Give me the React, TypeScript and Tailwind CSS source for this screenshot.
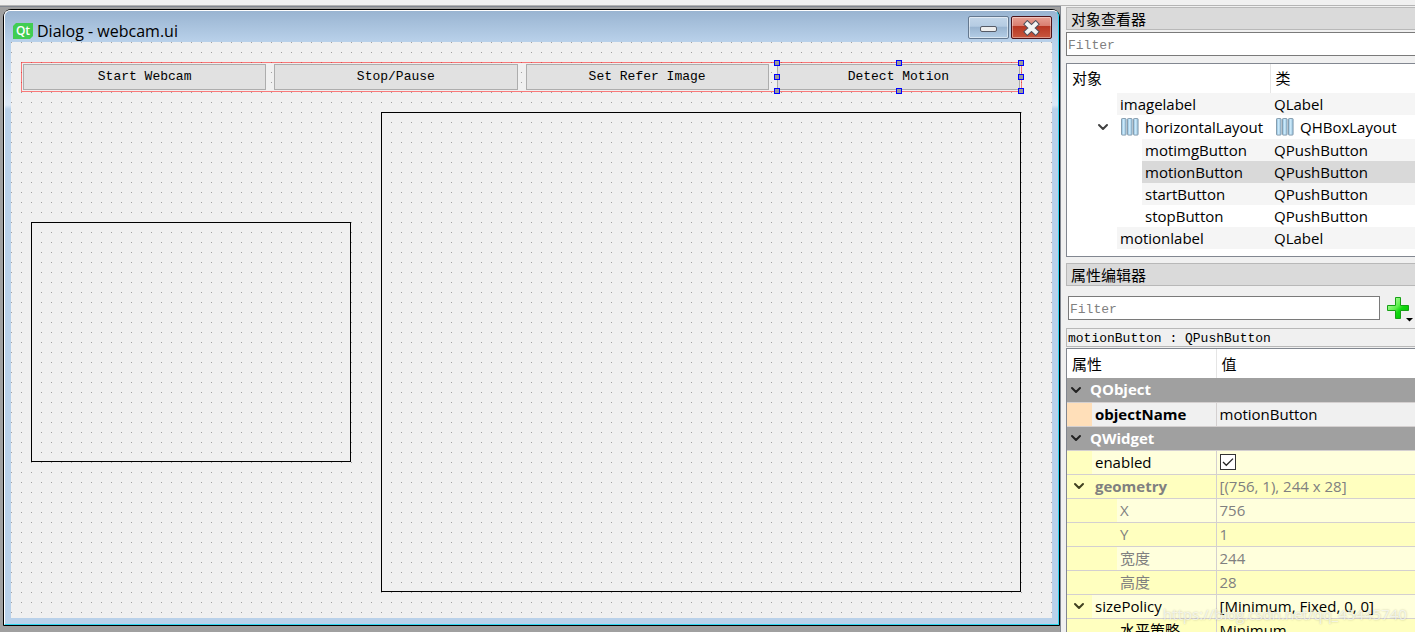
import { ReactNode } from 'react';
import { ChevronDown } from 'lucide-react';

interface TreeItem {
  name: string;
  type: string;
  level: 1 | 2;
  layout?: boolean;
  selected?: boolean;
  shaded?: boolean;
}

const OBJECTS: TreeItem[] = [
  { name: 'imagelabel', type: 'QLabel', level: 1, shaded: true },
  { name: 'horizontalLayout', type: 'QHBoxLayout', level: 1, layout: true },
  { name: 'motimgButton', type: 'QPushButton', level: 2, shaded: true },
  { name: 'motionButton', type: 'QPushButton', level: 2, selected: true },
  { name: 'startButton', type: 'QPushButton', level: 2, shaded: true },
  { name: 'stopButton', type: 'QPushButton', level: 2 },
  { name: 'motionlabel', type: 'QLabel', level: 1, shaded: true },
];

interface Property {
  name: string;
  value: ReactNode;
  tone: 'gray' | 'light' | 'dark';
  level: 1 | 2;
  open?: boolean;
  bold?: boolean;
  muted?: boolean;
}

const WIDGET_PROPERTIES: Property[] = [
  { name: 'enabled', value: <CheckBox label="enabled" />, tone: 'light', level: 1 },
  { name: 'geometry', value: '[(756, 1), 244 x 28]', tone: 'dark', level: 1, open: true, bold: true, muted: true },
  { name: 'X', value: '756', tone: 'light', level: 2, muted: true },
  { name: 'Y', value: '1', tone: 'dark', level: 2, muted: true },
  { name: '宽度', value: '244', tone: 'light', level: 2, muted: true },
  { name: '高度', value: '28', tone: 'dark', level: 2, muted: true },
  { name: 'sizePolicy', value: '[Minimum, Fixed, 0, 0]', tone: 'light', level: 1, open: true },
  { name: '水平策略', value: 'Minimum', tone: 'dark', level: 2 },
];

const HANDLES = [
  'left-0 top-0',
  'left-1/2 top-0',
  'left-full top-0',
  'left-0 top-1/2',
  'left-full top-1/2',
  'left-0 top-full',
  'left-1/2 top-full',
  'left-full top-full',
];

const MONO = "font-['Liberation_Mono','Noto_Sans_CJK_SC',monospace] text-[13px]";

function CheckBox({ label }: { label: string }) {
  return (
    <span className="relative block h-4 w-4">
      <input
        type="checkbox"
        defaultChecked
        aria-label={label}
        className="peer block h-4 w-4 appearance-none border border-[#333] bg-white"
      />
      <svg
        viewBox="0 0 16 16"
        className="pointer-events-none absolute inset-0 hidden h-4 w-4 peer-checked:block"
        fill="none"
        stroke="#222"
        strokeWidth="1.3"
      >
        <path d="M3 8 L6.3 11.3 L13 4.6" />
      </svg>
    </span>
  );
}

function QtLogo() {
  return (
    <svg viewBox="0 0 20 16" className="h-4 w-5 shrink-0">
      <path d="M3 0 H20 V13 L17 16 H0 V3 Z" fill="#41cd52" />
      <text
        x="10"
        y="12"
        textAnchor="middle"
        fill="#fff"
        fontFamily="Open Sans, sans-serif"
        fontWeight="600"
        fontSize="12"
      >
        Qt
      </text>
    </svg>
  );
}

function LayoutIcon() {
  return (
    <svg viewBox="0 0 18 18" className="h-[18px] w-[18px] shrink-0">
      <defs>
        <linearGradient id="bar" x1="0" x2="1" y1="0" y2="0">
          <stop offset="0" stopColor="#86b9dc" />
          <stop offset="0.45" stopColor="#cdeafa" />
          <stop offset="1" stopColor="#8fbbd8" />
        </linearGradient>
      </defs>
      {[0.5, 6.5, 12.5].map(x => (
        <rect
          key={x}
          x={x}
          y="0.5"
          width="4.6"
          height="16.6"
          rx="0.8"
          fill="url(#bar)"
          stroke="#7f96a8"
          strokeWidth="0.9"
        />
      ))}
    </svg>
  );
}

function PlusIcon() {
  return (
    <svg viewBox="0 0 27 26" className="h-[26px] w-[27px]">
      <defs>
        <linearGradient id="plus" x1="0" x2="1" y1="0" y2="1">
          <stop offset="0" stopColor="#d4ffc4" />
          <stop offset="0.45" stopColor="#5cf04a" />
          <stop offset="0.6" stopColor="#10d810" />
          <stop offset="1" stopColor="#00b800" />
        </linearGradient>
      </defs>
      <path
        d="M8.5 1.5 H13.5 V9.5 H21.5 V14.5 H13.5 V22.5 H8.5 V14.5 H0.5 V9.5 H8.5 Z"
        fill="url(#plus)"
        stroke="#16a016"
        strokeLinejoin="round"
      />
      <path d="M19 22 H26 L22.5 25.5 Z" fill="#000" />
    </svg>
  );
}

function DotGrid() {
  return (
    <svg className="pointer-events-none absolute inset-0 h-full w-full" shapeRendering="crispEdges">
      <defs>
        <pattern id="dots" width="10" height="10" patternUnits="userSpaceOnUse">
          <rect width="1" height="1" fill="#a0a0a0" />
        </pattern>
      </defs>
      <rect width="100%" height="100%" fill="url(#dots)" />
    </svg>
  );
}

function FormButton({ children, selected }: { children: ReactNode; selected?: boolean }) {
  return (
    <div className="relative flex-1">
      <button
        className={`${MONO} block h-[26px] w-full border border-[#adadad] bg-[#e1e1e1] text-black`}
      >
        {children}
      </button>
      {selected && (
        <div className="pointer-events-none absolute -inset-y-px -right-px left-0">
          {HANDLES.map(place => (
            <span
              key={place}
              className={`absolute h-1.5 w-1.5 -translate-x-1/2 -translate-y-1/2 border border-[#0000ff] bg-[#9b9b9b] ${place}`}
            />
          ))}
        </div>
      )}
    </div>
  );
}

function DesignWindow() {
  return (
    <section className="flex h-full flex-col rounded-t-lg border border-black bg-[#b9d1ea]">
      <div className="flex flex-1 flex-col rounded-t-md border border-t-white border-r-[#2fd5ee] border-b-[#2fd5ee] border-l-white bg-[linear-gradient(#99b4d1_0px,#b9d1ea_31px,#dce8f6_94px,#b9d1ea_98px)] px-1.5 pb-1.5">
        <header className="flex h-[31px] shrink-0 items-start justify-between">
          <div className="flex items-center gap-1 pt-2 pl-0.5">
            <QtLogo />
            <h1 className="text-base leading-6">Dialog - webcam.ui</h1>
          </div>
          <div className="flex gap-0.5 pt-[5px]">
            <button
              aria-label="Minimize"
              className="flex h-[23px] w-[41px] items-center justify-center rounded-xs border border-[#64788f] bg-[linear-gradient(#c3d6e9_0%,#b4cbe2_45%,#98b3cf_46%,#b4cee6_100%)] inset-ring inset-ring-white/50"
            >
              <span className="mt-0.5 h-1.5 w-[17px] rounded-xs border border-[#555a66] bg-[#eee]" />
            </button>
            <button
              aria-label="Close"
              className="flex h-[23px] w-[41px] items-center justify-center rounded-xs border border-[#4b1219] bg-[linear-gradient(#e8a093_0%,#d97e70_42%,#b73521_43%,#c8573f_100%)] inset-ring inset-ring-white/40"
            >
              <svg viewBox="0 0 19 16" className="h-4 w-[19px]" fill="none">
                <path d="M3.2 2 L15.8 14 M15.8 2 L3.2 14" stroke="#4d4f5c" strokeWidth="6" />
                <path d="M3.9 2.7 L15.1 13.3 M15.1 2.7 L3.9 13.3" stroke="#f3f3f3" strokeWidth="4" />
              </svg>
            </button>
          </div>
        </header>
        <main className="relative flex-1 bg-[#f0f0f0] pt-5 pr-[30px] pl-2.5">
          <DotGrid />
          <div className="relative flex gap-2 border border-[#ff0000]/50 p-px">
            <FormButton>Start Webcam</FormButton>
            <FormButton>Stop/Pause</FormButton>
            <FormButton>Set Refer Image</FormButton>
            <FormButton selected>Detect Motion</FormButton>
          </div>
          <div className="relative mt-5 flex items-start gap-[30px] pl-2.5">
            <div className="mt-[110px] h-60 w-80 shrink-0 border border-black" />
            <div className="h-[480px] w-[640px] border border-black" />
          </div>
        </main>
      </div>
    </section>
  );
}

function DockTitle({ children }: { children: ReactNode }) {
  return (
    <h2 className="h-[23px] border border-r-0 border-[#b8b8b8] bg-[#dadada] pl-1 text-[15px] leading-[22px]">
      {children}
    </h2>
  );
}

function ObjectInspector() {
  return (
    <section>
      <DockTitle>对象查看器</DockTitle>
      <input
        type="text"
        aria-label="Filter objects"
        placeholder="Filter"
        className={`${MONO} mt-0.5 block h-6 w-full border border-r-0 border-[#7a7a7a] bg-white px-px pt-0.5 placeholder:text-[#808080]`}
      />
      <div className="mt-[7px] border border-r-0 border-[#828790] bg-white pb-[7px]">
        <table className="w-full table-fixed border-collapse text-[15px]">
          <colgroup>
            <col className="w-[203px]" />
            <col />
          </colgroup>
          <thead>
            <tr className="h-[29px] text-left">
              <th className="border-r border-[#e5e5e5] p-0 pl-[5px] font-normal">对象</th>
              <th className="p-0 pl-[5px] font-normal">类</th>
            </tr>
          </thead>
          <tbody>
            {OBJECTS.map(item => {
              const fill = item.selected ? 'bg-[#d9d9d9]' : item.shaded ? 'bg-[#f5f5f5]' : 'bg-white';
              const indent = item.level === 2 ? 'pl-[75px]' : item.layout ? 'pl-7' : 'pl-[50px]';
              return (
                <tr key={item.name} className={item.layout ? 'h-6' : 'h-[22px]'}>
                  <td className={`p-0 leading-[22px] ${indent}`}>
                    <div
                      className={`flex items-center whitespace-nowrap ${
                        item.layout ? 'h-6' : 'h-[22px] pl-[3px]'
                      } ${fill}`}
                    >
                      {item.layout && (
                        <>
                          <ChevronDown className="mr-2.5 h-4 w-4 shrink-0 text-[#404040]" strokeWidth={3} />
                          <LayoutIcon />
                        </>
                      )}
                      <span className={item.layout ? 'ml-1.5' : ''}>{item.name}</span>
                    </div>
                  </td>
                  <td className={`p-0 ${fill}`}>
                    <div
                      className={`flex items-center gap-1.5 leading-[22px] ${
                        item.layout ? 'pl-1.5' : 'pl-1'
                      }`}
                    >
                      {item.layout && <LayoutIcon />}
                      {item.type}
                    </div>
                  </td>
                </tr>
              );
            })}
          </tbody>
        </table>
      </div>
    </section>
  );
}

function GroupRow({ name }: { name: string }) {
  return (
    <tr className="h-6 bg-[#a0a0a0] text-white">
      <th colSpan={2} className="border-b border-[#d4d0d0] p-0 text-left leading-[23px] font-bold">
        <div className="flex items-center gap-1.5 pl-px">
          <ChevronDown className="h-4 w-4 text-[#222]" strokeWidth={3} />
          {name}
        </div>
      </th>
    </tr>
  );
}

function PropertyRow({ property }: { property: Property }) {
  const { name, value, tone, level, open, bold, muted } = property;
  const fill = tone === 'gray' ? 'bg-[#f0f0f0]' : tone === 'light' ? 'bg-[#ffffdc]' : 'bg-[#ffffbf]';

  return (
    <tr className={`h-6 ${fill} ${muted ? 'text-[#808080]' : 'text-black'}`}>
      <td className="border-r border-b border-[#d4d0d0] p-0">
        <div className="flex h-[23px] items-center leading-[23px]">
          <span
            className={`flex h-full items-center pl-1 ${level === 2 ? 'w-[50px]' : 'w-[25px]'} ${
              tone === 'gray' ? 'bg-[#ffdfb9]' : 'bg-[#ffffbf]'
            }`}
          >
            {open && <ChevronDown className="h-4 w-4 text-[#404020]" strokeWidth={3} />}
          </span>
          <span className={`pl-[3px] ${bold ? 'font-bold' : ''}`}>{name}</span>
        </div>
      </td>
      <td className="border-b border-[#d4d0d0] p-0 pl-[3px] leading-[23px] whitespace-nowrap">{value}</td>
    </tr>
  );
}

function PropertyEditor() {
  return (
    <section className="mt-1.5 flex min-h-0 flex-1 flex-col">
      <DockTitle>属性编辑器</DockTitle>
      <div className="mt-2.5 flex items-start gap-[7px] pl-0.5">
        <input
          type="text"
          aria-label="Filter properties"
          placeholder="Filter"
          className={`${MONO} block h-6 min-w-0 flex-1 border border-[#7a7a7a] bg-white px-px pt-0.5 placeholder:text-[#808080]`}
        />
        <button aria-label="Add dynamic property" className="pr-px">
          <PlusIcon />
        </button>
      </div>
      <p className={`${MONO} mt-1.5 h-[19px] border border-r-0 border-[#b8b8b8] pl-px leading-5`}>
        motionButton : QPushButton
      </p>
      <div className="mt-px min-h-0 flex-1 overflow-hidden border border-r-0 border-b-0 border-[#828790] bg-white">
        <table className="w-full table-fixed border-collapse text-[15px]">
          <colgroup>
            <col className="w-[149px]" />
            <col />
          </colgroup>
          <thead>
            <tr className="h-[29px] text-left">
              <th className="border-r border-[#e5e5e5] p-0 pt-0.5 pl-[5px] font-normal">属性</th>
              <th className="p-0 pt-0.5 pl-[5px] font-normal">值</th>
            </tr>
          </thead>
          <tbody>
            <GroupRow name="QObject" />
            <PropertyRow
              property={{ name: 'objectName', value: 'motionButton', tone: 'gray', level: 1, bold: true }}
            />
            <GroupRow name="QWidget" />
            {WIDGET_PROPERTIES.map(property => (
              <PropertyRow key={property.name} property={property} />
            ))}
          </tbody>
        </table>
      </div>
    </section>
  );
}

export default function App() {
  return (
    <div className="relative flex h-screen flex-col overflow-hidden bg-[#f0f0f0] pt-[5px] font-['Open_Sans','Noto_Sans_CJK_SC',sans-serif] text-black">
      <div className="flex min-h-0 flex-1 border-t border-[#b4b4b4]">
        <div className="min-w-0 flex-1 border-t border-r border-[#828790] bg-[#a0a0a0] pt-0.5 pb-1.5 pl-[3px]">
          <DesignWindow />
        </div>
        <aside className="flex w-[354px] shrink-0 flex-col pt-px pl-[5px]">
          <ObjectInspector />
          <PropertyEditor />
        </aside>
      </div>
      <span className="pointer-events-none absolute right-2 bottom-2 text-[15px] leading-5 text-white/70 [text-shadow:0_0_2px_#0004]">
        https://blog.csdn.net/qq_45445740
      </span>
    </div>
  );
}
